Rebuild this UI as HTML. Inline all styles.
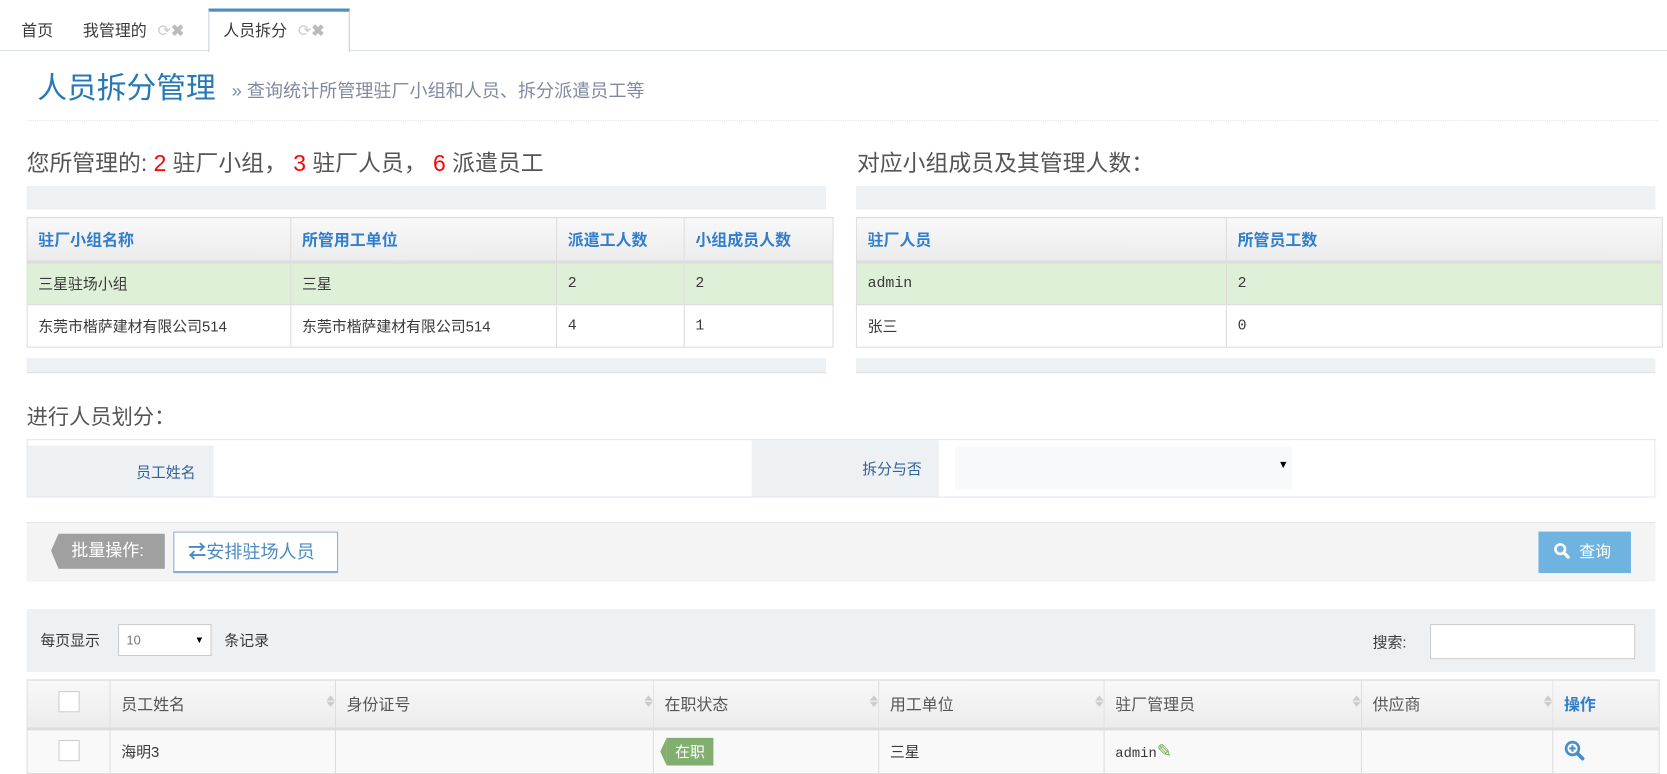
<!DOCTYPE html>
<html><head><meta charset="utf-8"><style>
*{box-sizing:border-box;margin:0;padding:0}
html,body{width:1667px;height:771px;overflow:hidden;background:#fff}
#w{position:absolute;left:0;top:0;width:1568px;height:725px;transform:scale(1.0632);transform-origin:0 0;font-family:"Liberation Sans","Noto Sans CJK SC",sans-serif;color:#393939;font-size:14px}
.a{position:absolute;white-space:nowrap}
table{border-collapse:collapse;position:absolute;table-layout:fixed}
td,th{border:1px solid #ddd;text-align:left;padding:0 10px;font-weight:normal}
th{background:linear-gradient(#f8f8f8,#ececec);border-bottom:3px solid #ddd}
.t1 th{color:#307ecc;font-weight:bold;font-size:15px;height:42px}
.t1 td{height:40px;font-size:14px}
.m{font-family:"Liberation Mono",monospace;font-size:13px}
.g td{background:#dff0d8}
.bar{position:absolute;background:#edf1f4}
.t3 th{color:#555;font-size:15px;height:46px;position:relative}
.t3 td{background:#f9f9f9;height:42px}
.sort{position:absolute;right:8px;top:16px;width:0}
.sort:before{content:"";position:absolute;border:4px solid transparent;border-bottom:5px solid #ccc;top:-6px}
.sort:after{content:"";position:absolute;border:4px solid transparent;border-top:5px solid #ccc;top:4px}
.cb{display:inline-block;width:20px;height:20px;border:1px solid #ccc;background:#fff}
</style></head><body><div id="w">
<div class="a" style="left:0;top:47px;width:1568px;height:1px;background:#d5e3ef"></div>
<div class="a" style="left:20px;top:18px;font-size:15px">首页</div>
<div class="a" style="left:78px;top:18px;font-size:15px">我管理的 <span style="color:#ccc;margin-left:6px">⟳</span><span style="color:#bbb;font-weight:bold">✖</span></div>
<div class="a" style="left:196px;top:8px;width:133px;height:41px;background:#fff;border:1px solid #c5d0dc;border-top:3px solid #4c8fbd;border-bottom:none"></div>
<div class="a" style="left:210px;top:18px;font-size:15px">人员拆分 <span style="color:#ccc;margin-left:6px">⟳</span><span style="color:#bbb;font-weight:bold">✖</span></div>
<div class="a" style="left:35px;top:61px;font-size:28px;color:#2679b5">人员拆分管理</div>
<div class="a" style="left:218px;top:71px;font-size:17px;color:#8089a0">» 查询统计所管理驻厂小组和人员、拆分派遣员工等</div>
<div class="a" style="left:25px;top:113px;width:1535px;border-top:1px dotted #e2e2e2"></div>
<div class="a" style="left:25px;top:137px;font-size:21.5px;color:#555">您所管理的: <span style="color:#f00">2</span> 驻厂小组， <span style="color:#f00">3</span> 驻厂人员， <span style="color:#f00">6</span> 派遣员工</div>
<div class="a" style="left:806px;top:137px;font-size:21.5px;color:#555">对应小组成员及其管理人数：</div>
<div class="bar" style="left:25px;top:175px;width:752px;height:22px"></div>
<div class="bar" style="left:805px;top:175px;width:752px;height:22px"></div>
<table class="t1" style="left:25px;top:204px;width:758px">
<colgroup><col style="width:248px"><col style="width:250px"><col style="width:120px"><col style="width:140px"></colgroup>
<tr><th>驻厂小组名称</th><th>所管用工单位</th><th>派遣工人数</th><th>小组成员人数</th></tr>
<tr class="g"><td>三星驻场小组</td><td>三星</td><td class="m">2</td><td class="m">2</td></tr>
<tr><td>东莞市楷萨建材有限公司514</td><td>东莞市楷萨建材有限公司514</td><td class="m">4</td><td class="m">1</td></tr>
</table>
<table class="t1" style="left:805px;top:204px;width:758px">
<colgroup><col style="width:348px"><col style="width:410px"></colgroup>
<tr><th>驻厂人员</th><th>所管员工数</th></tr>
<tr class="g"><td class="m">admin</td><td class="m">2</td></tr>
<tr><td>张三</td><td class="m">0</td></tr>
</table>
<div class="bar" style="left:25px;top:337px;width:752px;height:14px;border-bottom:1px solid #e0e0e0"></div>
<div class="bar" style="left:805px;top:337px;width:752px;height:14px;border-bottom:1px solid #e0e0e0"></div>
<div class="a" style="left:25px;top:376px;font-size:20px;color:#555">进行人员划分：</div>
<div class="a" style="left:25px;top:413px;width:1532px;height:55px;border:1px solid #dfe8f0"></div>
<div class="bar" style="left:26px;top:419px;width:175px;height:48px"></div>
<div class="a" style="left:128px;top:434px;color:#336199">员工姓名</div>
<div class="bar" style="left:707px;top:414px;width:176px;height:53px"></div>
<div class="a" style="left:811px;top:431px;color:#336199">拆分与否</div>
<div class="a" style="left:898px;top:420px;width:317px;height:40px;background:#f8f9fa"></div>
<div class="a" style="left:1202px;top:432px;font-size:10px;color:#000">▼</div>
<div class="a" style="left:25px;top:491px;width:1532px;height:56px;background:#f4f4f4;border-top:1px solid #e5e5e5"></div>
<div class="a" style="left:55px;top:502px;width:100px;height:33px;background:#a0a0a0;color:#fff;font-size:16px;line-height:33px;padding-left:12px">批量操作:</div>
<div class="a" style="left:48px;top:502px;width:0;height:0;border-top:16px solid transparent;border-bottom:17px solid transparent;border-right:7px solid #a0a0a0"></div>
<div class="a" style="left:163px;top:500px;width:155px;height:39px;background:#fff;border:1px solid #8aaccf;border-bottom:2px solid #8aaccf;color:#4a8bc2;font-size:17px;line-height:37px;padding-left:13px"><b style="color:#4a8bc2">⇄</b>安排驻场人员</div>
<div class="a" style="left:1447px;top:500px;width:87px;height:39px;background:#6fb3e0;color:#fff;font-size:15px;line-height:39px;padding-left:14px">
<svg width="16" height="16" viewBox="0 0 16 16" style="vertical-align:-2px"><circle cx="6.5" cy="6.5" r="4.5" fill="none" stroke="#fff" stroke-width="2.4"/><path d="M10 10l4 4" stroke="#fff" stroke-width="3" stroke-linecap="round"/></svg>&nbsp; 查询</div>
<div class="bar" style="left:25px;top:573px;width:1532px;height:59px"></div>
<div class="a" style="left:38px;top:592px">每页显示</div>
<div class="a" style="left:111px;top:587px;width:88px;height:30px;background:#fff;border:1px solid #ccc;font-size:12px;color:#777;line-height:28px;padding-left:7px">10<span style="position:absolute;right:6px;top:0;font-size:9px;color:#000">▼</span></div>
<div class="a" style="left:211px;top:592px">条记录</div>
<div class="a" style="left:1291px;top:594px">搜索:</div>
<div class="a" style="left:1345px;top:587px;width:193px;height:33px;background:#fff;border:1px solid #ccc"></div>
<table class="t3" style="left:25px;top:639px;width:1535px">
<colgroup><col style="width:78px"><col style="width:212px"><col style="width:299px"><col style="width:212px"><col style="width:212px"><col style="width:242px"><col style="width:180px"><col style="width:100px"></colgroup>
<tr><th style="text-align:center"><span class="cb"></span></th><th>员工姓名<span class="sort"></span></th><th>身份证号<span class="sort"></span></th><th>在职状态<span class="sort"></span></th><th>用工单位<span class="sort"></span></th><th>驻厂管理员<span class="sort"></span></th><th>供应商<span class="sort"></span></th><th style="color:#307ecc;font-weight:bold">操作</th></tr>
<tr><td style="text-align:center"><span class="cb"></span></td><td>海明3</td><td></td><td style="position:relative"><span style="display:inline-block;background:#82af6f;color:#fff;padding:3px 8px;font-size:14px;position:relative;margin-left:2px">在职<span style="position:absolute;left:-6px;top:0;border-top:13px solid transparent;border-bottom:13px solid transparent;border-right:6px solid #82af6f"></span></span></td><td>三星</td><td class="m">admin<span style="color:#69aa46;font-size:17px">✎</span></td><td></td><td><svg width="20" height="20" viewBox="0 0 20 20"><circle cx="8" cy="8" r="6" fill="none" stroke="#478fca" stroke-width="2.5"/><path d="M8 5v6M5 8h6" stroke="#478fca" stroke-width="2"/><path d="M12.5 12.5l5 5" stroke="#478fca" stroke-width="3.5" stroke-linecap="round"/></svg></td></tr>
</table>
</div></body></html>
